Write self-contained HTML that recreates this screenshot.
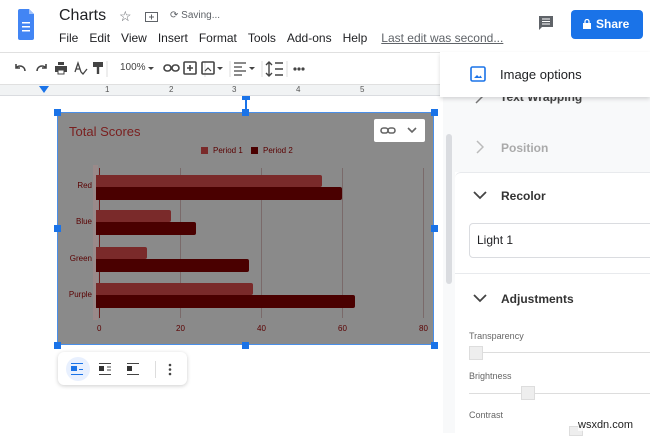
<!DOCTYPE html>
<html><head><style>
*{margin:0;padding:0;box-sizing:border-box}
body{width:650px;height:433px;overflow:hidden;background:#fff;font-family:"Liberation Sans",sans-serif;position:relative;color:#202124}
.a{position:absolute}
.menu span{margin-right:11px}
.h{position:absolute;width:7px;height:7px;background:#1a73e8}
.bar{position:absolute;left:96px;border-radius:0 2px 2px 0}
.p1{background:#7a2a2a;height:12px}
.p2{background:#4a0000;height:13px}
.lbl{position:absolute;font-size:8px;color:#5a0000;text-align:right;width:40px;left:52px}
.ax{position:absolute;top:324px;font-size:8px;color:#5a0000}
.g{position:absolute;top:168px;width:1px;height:150px;background:#7a6a6a}
.t{position:absolute;top:60px}
</style></head><body>
<svg class="a" style="left:18px;top:9px" width="16" height="31" viewBox="0 0 16 31"><path d="M2 0h9l5 5v24a2 2 0 0 1-2 2H2a2 2 0 0 1-2-2V2a2 2 0 0 1 2-2z" fill="#4285f4"/><path d="M11 0v5h5z" fill="#a1c2fa"/><rect x="4" y="13" width="8" height="1.5" fill="#fff"/><rect x="4" y="17" width="8" height="1.5" fill="#fff"/><rect x="4" y="21" width="8" height="1.5" fill="#fff"/></svg>
<div class="a" style="left:59px;top:7px;font-size:16px">Charts</div>
<div class="a" style="left:119px;top:8px;font-size:14px;color:#5f6368">☆</div>
<svg class="a" style="left:145px;top:11px" width="13" height="11"><rect x="0.5" y="1.5" width="12" height="9" fill="none" stroke="#5f6368"/><path d="M4 6h5M6.5 3.5v5" stroke="#5f6368"/></svg>
<div class="a" style="left:170px;top:10px;font-size:10px;color:#5f6368">⟳ Saving...</div>
<div class="a menu" style="left:59px;top:31px;font-size:12px;white-space:nowrap"><span>File</span><span>Edit</span><span>View</span><span>Insert</span><span>Format</span><span>Tools</span><span>Add-ons</span><span>Help</span><span style="color:#5f6368;text-decoration:underline;margin-left:3px">Last edit was second...</span></div>
<svg class="a" style="left:538px;top:15px" width="16" height="17"><path d="M1 1h14v11H4l-3 3z" fill="#5f6368"/><path d="M4 4h8M4 6.5h8M4 9h8" stroke="#fff"/></svg>
<div class="a" style="left:571px;top:10px;width:72px;height:29px;background:#1a73e8;border-radius:4px;color:#fff;font-size:12px;font-weight:bold;line-height:29px;padding-left:25px">Share</div>
<svg class="a" style="left:583px;top:19px" width="8" height="10"><rect x="0" y="4" width="8" height="6" fill="#fff"/><path d="M2 4V2.5a2 2 0 0 1 4 0V4" fill="none" stroke="#fff" stroke-width="1.3"/></svg>
<!-- toolbar -->
<div class="a" style="left:0;top:52px;width:650px;height:1px;background:#e0e0e0"></div>
<svg class="a" style="left:0;top:58px" width="440" height="20" fill="none" stroke="#444" stroke-width="1.6">
<path d="M25 13a5 5 0 0 0-9-3M16 6v4h4"/>
<path d="M37 13a5 5 0 0 1 9-3M46 6v4h-4"/>
<rect x="55" y="8" width="12" height="6" fill="#444" stroke="none"/><rect x="58" y="4" width="6" height="3" fill="#444" stroke="none"/><rect x="58" y="12" width="6" height="4" fill="#fff" stroke="#444" stroke-width="1"/>
<path d="M75 14l3-9 3 9M76 11h4M81 14l2 2 4-5" stroke-width="1.3"/>
<rect x="93" y="4" width="10" height="5" fill="#444" stroke="none"/><path d="M98 9v7" stroke-width="2.4"/>
<path d="M107 3v16M205 3v16M230 3v16M262 3v16M287 3v16" stroke="#ddd" stroke-width="1"/>
<path d="M148 9l3 3 3-3" fill="#444" stroke="none"/>
<rect x="164" y="7" width="7" height="6" rx="3"/><rect x="172" y="7" width="7" height="6" rx="3"/>
<rect x="184" y="4" width="12" height="12" rx="1"/><path d="M190 7v6M187 10h6"/>
<rect x="202" y="4" width="12" height="12" rx="1"/><path d="M205 13l3-3 3 3" stroke-width="1.2"/><path d="M217 9l3 3 3-3" fill="#444" stroke="none"/>
<path d="M234 5h12M234 9h8M234 13h12M234 17h8" stroke-width="1.3"/><path d="M249 9l3 3 3-3" fill="#444" stroke="none"/>
<path d="M269 4v14M266 7l3-3 3 3M266 15l3 3 3-3M275 5h8M275 11h8M275 17h8" stroke-width="1.4"/>
<circle cx="295" cy="11" r=".8"/><circle cx="299" cy="11" r=".8"/><circle cx="303" cy="11" r=".8"/>
</svg>
<div class="a" style="left:120px;top:62px;font-size:10px;color:#444">100%</div>
<div class="a" style="left:0;top:84px;width:455px;height:12px;background:#f1f3f4;border-top:1px solid #e0e0e0;border-bottom:1px solid #dadce0"></div>
<div class="a" style="left:0;top:85px;font-size:8px;color:#555;white-space:nowrap">
<span style="position:absolute;left:105px">1</span><span style="position:absolute;left:169px">2</span><span style="position:absolute;left:232px">3</span><span style="position:absolute;left:296px">4</span><span style="position:absolute;left:360px">5</span></div>
<svg class="a" style="left:39px;top:86px" width="10" height="8"><path d="M0 0h10L5 7z" fill="#1a73e8"/></svg>
<!-- image -->
<div class="a" style="left:57px;top:112px;width:377px;height:233px;background:#8a8a8a;border:1px solid #4a8fe8"></div>
<div class="a" style="left:245px;top:97px;width:2px;height:15px;background:#1a73e8"></div>
<div class="h" style="left:242px;top:96px;width:8px;height:4px"></div>
<div class="h" style="left:54px;top:109px"></div><div class="h" style="left:242px;top:109px"></div><div class="h" style="left:431px;top:109px"></div>
<div class="h" style="left:54px;top:225px"></div><div class="h" style="left:431px;top:225px"></div>
<div class="h" style="left:54px;top:342px"></div><div class="h" style="left:242px;top:342px"></div><div class="h" style="left:431px;top:342px"></div>
<div class="a" style="left:69px;top:124px;font-size:13px;color:#7a2020">Total Scores</div>
<div class="a" style="left:201px;top:147px;width:7px;height:7px;background:#7a2a2a"></div>
<div class="a" style="left:213px;top:146px;font-size:8px;color:#5a0000">Period 1</div>
<div class="a" style="left:251px;top:147px;width:7px;height:7px;background:#4a0000"></div>
<div class="a" style="left:263px;top:146px;font-size:8px;color:#5a0000">Period 2</div>
<div class="a" style="left:374px;top:119px;width:51px;height:23px;background:#fff;border-radius:2px"></div>
<svg class="a" style="left:380px;top:124px" width="40" height="13" fill="none" stroke="#666" stroke-width="1.6"><rect x="1" y="4" width="7" height="5" rx="2.5"/><rect x="8" y="4" width="7" height="5" rx="2.5"/><path d="M28 4l4 4 4-4"/></svg>
<div class="a" style="left:93px;top:165px;width:5px;height:155px;background:#9a8a8a"></div>
<div class="g" style="left:99px;background:#6a1a1a"></div><div class="g" style="left:180px"></div><div class="g" style="left:261px"></div><div class="g" style="left:342px"></div><div class="g" style="left:423px"></div>
<div class="bar p1" style="top:175px;width:226px"></div><div class="bar p2" style="top:187px;width:246px"></div>
<div class="bar p1" style="top:210px;width:75px"></div><div class="bar p2" style="top:222px;width:100px"></div>
<div class="bar p1" style="top:247px;width:51px"></div><div class="bar p2" style="top:259px;width:153px"></div>
<div class="bar p1" style="top:283px;width:157px"></div><div class="bar p2" style="top:295px;width:259px"></div>
<div class="lbl" style="top:181px">Red</div><div class="lbl" style="top:217px">Blue</div><div class="lbl" style="top:254px">Green</div><div class="lbl" style="top:290px">Purple</div>
<div class="ax" style="left:97px">0</div><div class="ax" style="left:176px">20</div><div class="ax" style="left:257px">40</div><div class="ax" style="left:338px">60</div><div class="ax" style="left:419px">80</div>
<!-- floating toolbar -->
<div class="a" style="left:58px;top:352px;width:129px;height:33px;background:#fff;border-radius:6px;box-shadow:0 1px 4px rgba(0,0,0,.2)"></div>
<div class="a" style="left:66px;top:357px;width:24px;height:24px;border-radius:50%;background:#e8f0fe"></div>
<svg class="a" style="left:71px;top:363px" width="13" height="12"><path d="M0 .5h12M0 11.5h12M8 6.5h4" stroke="#1a73e8"/><rect x="0" y="3" width="6" height="5" fill="#1a73e8"/></svg>
<svg class="a" style="left:99px;top:363px" width="13" height="12"><path d="M0 .5h12M0 11.5h12M8 4h4M8 7h4" stroke="#444"/><rect x="0" y="3" width="5" height="5" fill="#333"/></svg>
<svg class="a" style="left:127px;top:363px" width="13" height="12"><path d="M0 .5h12M0 11.5h12" stroke="#444"/><rect x="0" y="3" width="5" height="5" fill="#333"/></svg>
<div class="a" style="left:155px;top:361px;width:1px;height:17px;background:#ddd"></div>
<svg class="a" style="left:168px;top:363px" width="4" height="13"><circle cx="2" cy="2" r="1.3" fill="#444"/><circle cx="2" cy="6.5" r="1.3" fill="#444"/><circle cx="2" cy="11" r="1.3" fill="#444"/></svg>
<!-- scrollbar -->
<div class="a" style="left:443px;top:97px;width:12px;height:336px;background:#f8f9fa"></div>
<div class="a" style="left:446px;top:134px;width:6px;height:150px;background:#dadce0;border-radius:3px"></div>
<!-- side panel -->
<div class="a" style="left:455px;top:96px;width:195px;height:76px;background:#f8f9fa"></div>
<div class="a" style="left:455px;top:172px;width:195px;height:261px;background:#fff;border-top:1px solid #e8eaed;border-radius:6px 0 0 0"></div>
<div class="a" style="left:500px;top:90px;font-size:12px;color:#444;font-weight:bold">Text Wrapping</div>
<svg class="a" style="left:474px;top:94px" width="12" height="10"><path d="M2 9l8-8" stroke="#777" stroke-width="1.5"/></svg>
<div class="a" style="left:440px;top:52px;width:210px;height:45px;background:#fff;box-shadow:0 2px 4px rgba(0,0,0,.15)"></div>
<svg class="a" style="left:470px;top:66px" width="16" height="16"><rect x="1" y="1" width="14" height="14" rx="1.5" fill="none" stroke="#1a73e8" stroke-width="1.6"/><path d="M4 12l3-3 2 2 1.5-1.5L12 12z" fill="#1a73e8"/></svg>
<div class="a" style="left:500px;top:67px;font-size:13px">Image options</div>
<svg class="a" style="left:476px;top:140px" width="8" height="14"><path d="M1 1l6 6-6 6" fill="none" stroke="#bbb" stroke-width="1.5"/></svg>
<div class="a" style="left:501px;top:141px;font-size:12px;color:#aaa;font-weight:bold">Position</div>
<svg class="a" style="left:473px;top:191px" width="14" height="9"><path d="M1 1l6 6 6-6" fill="none" stroke="#444" stroke-width="1.8"/></svg>
<div class="a" style="left:501px;top:189px;font-size:12px;font-weight:bold;color:#333">Recolor</div>
<div class="a" style="left:469px;top:223px;width:190px;height:35px;border:1px solid #dadce0;border-radius:4px;font-size:12px;line-height:33px;padding-left:7px">Light 1</div>
<div class="a" style="left:455px;top:273px;width:195px;height:1px;background:#e8eaed"></div>
<svg class="a" style="left:473px;top:294px" width="14" height="9"><path d="M1 1l6 6 6-6" fill="none" stroke="#444" stroke-width="1.8"/></svg>
<div class="a" style="left:501px;top:292px;font-size:12px;font-weight:bold;color:#333">Adjustments</div>
<div class="a" style="left:469px;top:331px;font-size:9px;color:#666">Transparency</div>
<div class="a" style="left:469px;top:352px;width:181px;height:1px;background:#ddd"></div>
<div class="a" style="left:469px;top:346px;width:14px;height:14px;background:#eee;border:1px solid #ddd"></div>
<div class="a" style="left:469px;top:371px;font-size:9px;color:#666">Brightness</div>
<div class="a" style="left:469px;top:393px;width:181px;height:1px;background:#ddd"></div>
<div class="a" style="left:521px;top:386px;width:14px;height:14px;background:#eee;border:1px solid #ddd"></div>
<div class="a" style="left:469px;top:410px;font-size:9px;color:#666">Contrast</div>
<div class="a" style="left:569px;top:426px;width:14px;height:10px;background:#eee;border:1px solid #ddd"></div>
<div class="a" style="left:578px;top:419px;font-size:11px;color:#222;background:rgba(255,255,255,.7)">wsxdn.com</div>
</body></html>
